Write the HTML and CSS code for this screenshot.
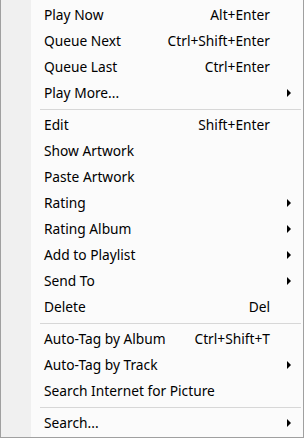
FILE: index.html
```html
<!DOCTYPE html>
<html lang="en">
<head>
    <meta charset="UTF-8">
    <title>Context Menu</title>
    <link rel="stylesheet" href="styles.css">
</head>
<body>
<div class="menu">
    <div class="item"><span class="label">Play Now</span><span class="keys">Alt+Enter</span><span class="sub"></span></div>
    <div class="item"><span class="label">Queue Next</span><span class="keys">Ctrl+Shift+Enter</span><span class="sub"></span></div>
    <div class="item"><span class="label">Queue Last</span><span class="keys">Ctrl+Enter</span><span class="sub"></span></div>
    <div class="item"><span class="label">Play More...</span><span class="keys"></span><span class="sub"><i class="arrow"></i></span></div>

    <div class="sep"></div>

    <div class="item"><span class="label">Edit</span><span class="keys">Shift+Enter</span><span class="sub"></span></div>
    <div class="item"><span class="label">Show Artwork</span><span class="keys"></span><span class="sub"></span></div>
    <div class="item"><span class="label">Paste Artwork</span><span class="keys"></span><span class="sub"></span></div>
    <div class="item"><span class="label">Rating</span><span class="keys"></span><span class="sub"><i class="arrow"></i></span></div>
    <div class="item"><span class="label">Rating Album</span><span class="keys"></span><span class="sub"><i class="arrow"></i></span></div>
    <div class="item"><span class="label">Add to Playlist</span><span class="keys"></span><span class="sub"><i class="arrow"></i></span></div>
    <div class="item"><span class="label">Send To</span><span class="keys"></span><span class="sub"><i class="arrow"></i></span></div>
    <div class="item"><span class="label">Delete</span><span class="keys">Del</span><span class="sub"></span></div>

    <div class="sep"></div>

    <div class="item"><span class="label">Auto-Tag by Album</span><span class="keys">Ctrl+Shift+T</span><span class="sub"></span></div>
    <div class="item"><span class="label">Auto-Tag by Track</span><span class="keys"></span><span class="sub"><i class="arrow"></i></span></div>
    <div class="item"><span class="label">Search Internet for Picture</span><span class="keys"></span><span class="sub"></span></div>

    <div class="sep"></div>

    <div class="item"><span class="label">Search...</span><span class="keys"></span><span class="sub"><i class="arrow"></i></span></div>
</div>
</body>
</html>
```

FILE: styles.css
```css
* {
    box-sizing: border-box;
    margin: 0;
    padding: 0;
}

body {
    font-family: 'Segoe UI', 'Noto Sans', sans-serif;
    font-size: 13.75px;
    color: #000;
    background: #fff;
}

.menu {
    width: 304px;
    height: 438px;
    border: 1px solid #a0a0a0;
    border-top: none;
    padding: 2px 1px 1px;
    background: linear-gradient(to right, #f0f0f0 30px, #fbfbfb 30px);
    display: flex;
    flex-direction: column;
}

.item {
    height: 26px;
    display: flex;
    align-items: center;
    padding-left: 42px;
    padding-bottom: 2px;
}

.label {
    flex: 1;
    white-space: nowrap;
}

.keys {
    white-space: nowrap;
}

.sub {
    width: 32px;
    height: 26px;
    display: flex;
    align-items: center;
    padding-left: 17px;
    padding-top: 2px;
}

.arrow {
    width: 0;
    height: 0;
    border-left: 4px solid #000;
    border-top: 4px solid transparent;
    border-bottom: 4px solid transparent;
}

.sep {
    height: 1px;
    margin: 3px 1px 2px 38px;
    background: #d7d7d7;
}
```
